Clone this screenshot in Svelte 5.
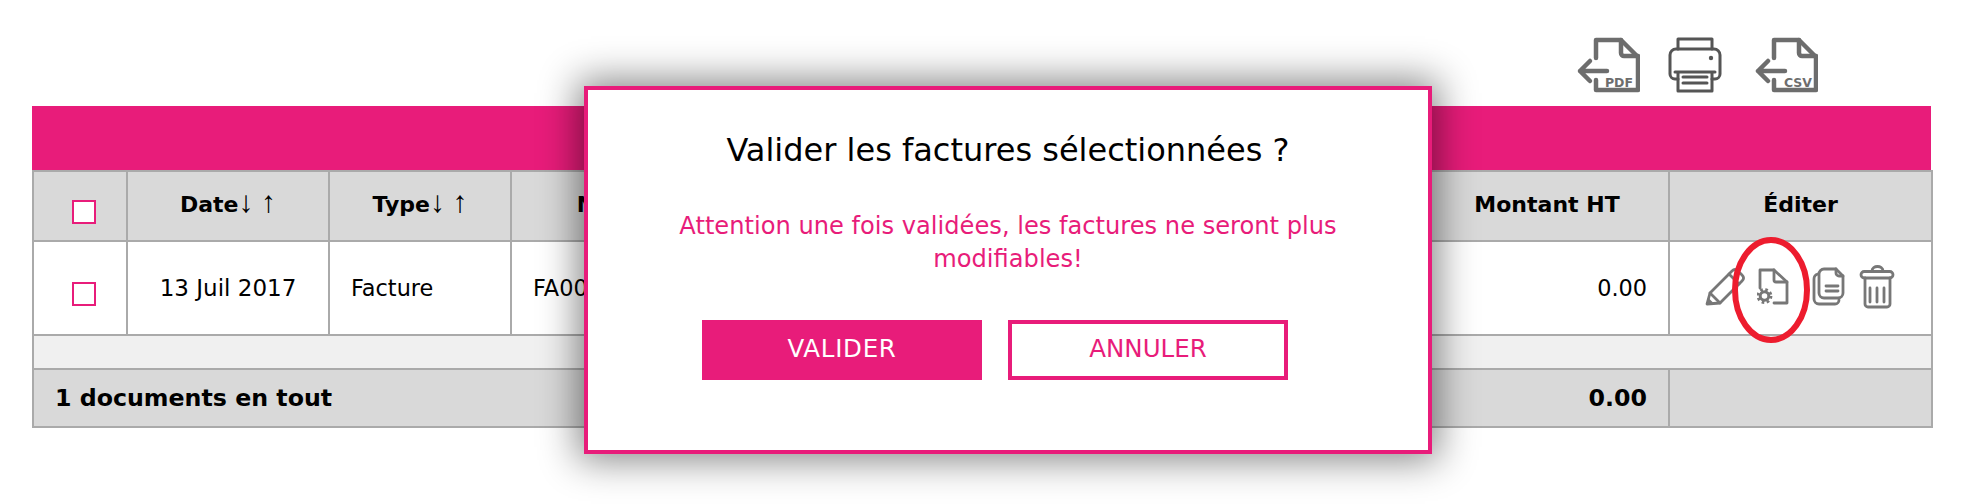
<script>
  const headers = [
    { label: 'Date', sort: true },
    { label: 'Type', sort: true },
    { label: 'Numéro', sort: true },
    { label: '', sort: false },
    { label: 'Montant HT', sort: false },
    { label: 'Éditer', sort: false }
  ];
</script>

<div class="page">
  <div class="tools">
    <svg class="export" viewBox="0 0 64 58" aria-label="Export PDF">
      <path class="s5" d="M20 22V4h25l17 17v33H20V44" />
      <path class="s5" d="M45 4v13a3 3 0 0 0 3 3h14" />
      <path class="s5" d="M31 35H4M14 25L4 35l10 10" />
      <text x="57" y="51" text-anchor="end" class="tag">PDF</text>
    </svg>
    <svg class="print" viewBox="0 0 58 58" aria-label="Imprimer">
      <path class="s3" d="M10 13V3h34v10" />
      <path class="s3" d="M10 43H7a5 5 0 0 1-5-5V19a6 6 0 0 1 6-6h38a6 6 0 0 1 6 6v19a5 5 0 0 1-5 5h-3" />
      <path class="s3" d="M7 36h40M10 36v19h34V36" />
      <path class="s3" d="M15 41h24M15 47h24" />
      <circle cx="43" cy="22" r="2.200" fill="#555" />
    </svg>
    <svg class="export" viewBox="0 0 64 58" aria-label="Export CSV">
      <path class="s5" d="M20 22V4h25l17 17v33H20V44" />
      <path class="s5" d="M45 4v13a3 3 0 0 0 3 3h14" />
      <path class="s5" d="M31 35H4M14 25L4 35l10 10" />
      <text x="58" y="51" text-anchor="end" class="tag">CSV</text>
    </svg>
  </div>

  <div class="band"></div>

  <table>
    <colgroup>
      <col style="width: 94px" />
      <col style="width: 202px" />
      <col style="width: 182px" />
      <col style="width: 267px" />
      <col style="width: 647px" />
      <col style="width: 244px" />
      <col style="width: 263px" />
    </colgroup>
    <thead>
      <tr>
        <th class="check"><span class="box"></span></th>
        {#each headers as h}
          <th>{h.label}{#if h.sort}<span class="arrows"> ↓ ↑</span>{/if}</th>
        {/each}
      </tr>
    </thead>
    <tbody>
      <tr class="row">
        <td class="check"><span class="box"></span></td>
        <td class="center">13 Juil 2017</td>
        <td>Facture</td>
        <td>FA0001</td>
        <td></td>
        <td class="num">0.00</td>
        <td class="actions">
          <div class="icons">
            <svg class="i-pencil" viewBox="0 0 42 42" aria-label="Modifier">
              <path class="s3g" d="M3 38l3-11L28 5q3-3 6 0l4 4q3 3 0 6L16 37z" />
              <path class="s3g" d="M6 27l10 10M25 8l10 10" />
              <path d="M3 38l1.500-6 4.500 4.500z" fill="#777" />
            </svg>
            <svg class="i-doc" viewBox="0 0 32 38" aria-label="Générer">
              <path class="s3g" d="M3 21V3h14l13 12v21H17" />
              <path class="s3g" d="M17 3v10a2 2 0 0 0 2 2h11" />
              <circle cx="7.500" cy="29" r="4.300" fill="none" stroke="#777" stroke-width="3" />
              <circle cx="7.500" cy="29" r="6.500" fill="none" stroke="#777" stroke-width="2.800" stroke-dasharray="2.600 2.505" />
            </svg>
            <svg class="i-copy" viewBox="0 0 34 40" aria-label="Dupliquer">
              <path class="s3g" d="M6 8q-4 1-4 5v20a5 5 0 0 0 5 5h16a4 4 0 0 0 4-4" />
              <path class="s3g" d="M12 3h12l7 7v17a5 5 0 0 1-5 5H12a5 5 0 0 1-5-5V8a5 5 0 0 1 5-5z" />
              <path class="s3g" d="M24 3v4a3 3 0 0 0 3 3h4M14 20h12M14 25h12" />
            </svg>
            <svg class="i-trash" viewBox="0 0 37 48" aria-label="Supprimer">
              <rect class="s3g" x="3" y="8.500" width="32" height="6.500" rx="3.200" />
              <path class="s3g" d="M14 8c0-6 11-6 11 0" />
              <path class="s3g" d="M7 15v26a3 3 0 0 0 3 3h19a3 3 0 0 0 3-3V15" />
              <path class="s3g" d="M12 25v14M19 25v14M26 25v14" />
            </svg>
          </div>
        </td>
      </tr>
      <tr class="spacer"><td colspan="7"></td></tr>
      <tr class="total">
        <td colspan="5">1 documents en tout</td>
        <td class="num">0.00</td>
        <td></td>
      </tr>
    </tbody>
  </table>

  <svg class="circle" viewBox="0 0 80 108" aria-hidden="true">
    <ellipse cx="40" cy="54" rx="36" ry="50" fill="none" stroke="#ed1c2e" stroke-width="6" />
  </svg>

  <div class="modal" role="dialog" aria-label="Valider">
    <h2>Valider les factures sélectionnées ?</h2>
    <p>Attention une fois validées, les factures ne seront plus modifiables!</p>
    <div class="buttons">
      <button class="primary">VALIDER</button>
      <button class="secondary">ANNULER</button>
    </div>
  </div>
</div>

<style>
  :global(body) {
    margin: 0;
    background: #fff;
  }

  .page {
    position: relative;
    width: 1968px;
    height: 504px;
    padding: 0 37px 0 32px;
    box-sizing: border-box;
    font-family: "DejaVu Sans", Verdana, sans-serif;
    font-size: 22.400px;
    color: #000;
    overflow: hidden;
  }

  .tools {
    display: flex;
    justify-content: flex-end;
    align-items: center;
    height: 58px;
    padding: 36px 113px 12px 0;
    gap: 28px;
    box-sizing: content-box;
  }

  .tools svg { display: block; height: 58px; }
  .export { width: 64px; }
  .print { width: 58px; }

  .tag {
    font-family: "DejaVu Sans", sans-serif;
    font-weight: 700;
    font-size: 12.500px;
    fill: #6d6d6d;
  }

  .s5 { fill: none; stroke: #6d6d6d; stroke-width: 4.500; stroke-linejoin: round; stroke-linecap: round; }
  .s3 { fill: none; stroke: #555; stroke-width: 3; stroke-linejoin: round; stroke-linecap: round; }
  .s3g { fill: none; stroke: #777; stroke-width: 2.800; stroke-linejoin: round; stroke-linecap: round; }

  .band {
    height: 64px;
    background: #e81c7a;
  }

  table {
    width: 1899px;
    table-layout: fixed;
    border-collapse: collapse;
  }

  th, td {
    border: 2px solid #aaa;
    padding: 0 21px;
    box-sizing: border-box;
  }

  th {
    height: 70px;
    background: #d9d9d9;
    font-size: 22px;
    line-height: 26px;
    font-weight: 700;
    text-align: center;
    white-space: nowrap;
    padding-bottom: 2px;
  }

  .arrows {
    font-family: "Liberation Serif", "DejaVu Sans", serif;
    font-size: 30px;
    line-height: 20px;
    font-weight: 400;
  }

  .row td { height: 94px; padding-bottom: 0; }
  .center { text-align: center; font-size: 23px; }
  .num { text-align: right; }
  th.check, td.check, .row td.check { text-align: center; padding: 0 0 0 7px; }

  .box {
    display: inline-block;
    width: 24px;
    height: 24px;
    box-sizing: border-box;
    border: 2px solid #e81c7a;
    background: #fff;
    vertical-align: middle;
    margin-top: 11px;
  }

  .row td.actions { padding: 0; }
  .icons {
    display: flex;
    align-items: center;
    gap: 11px;
    padding-left: 34px;
    margin-bottom: 2px;
  }
  .icons svg { display: block; flex: none; }
  .i-pencil { width: 42px; height: 42px; }
  .i-doc { width: 32px; height: 38px; margin-right: 12px; margin-bottom: 2px; }
  .i-copy { width: 34px; height: 40px; margin-right: 1px; margin-bottom: 2px; }
  .i-trash { width: 37px; height: 48px; }

  .spacer td { height: 34px; background: #f0f0f0; padding: 0; }

  .total td {
    height: 58px;
    background: #d9d9d9;
    font-weight: 700;
    font-size: 23.700px;
    padding-bottom: 1px;
  }

  .circle {
    position: absolute;
    left: 1731px;
    top: 236px;
    width: 80px;
    height: 108px;
  }

  .modal {
    position: absolute;
    left: 584px;
    top: 86px;
    width: 848px;
    height: 368px;
    box-sizing: border-box;
    border: 4px solid #e81c7a;
    background: #fff;
    box-shadow: 0 0 36px 6px rgba(0, 0, 0, 0.48);
    text-align: center;
    padding: 39px 80px 0;
  }

  h2 {
    margin: 0;
    font-weight: 400;
    font-size: 32px;
    line-height: 42px;
  }

  p {
    margin: 39px 0 0;
    color: #e81c7a;
    font-size: 24.150px;
    line-height: 33px;
  }

  .buttons {
    display: flex;
    gap: 26px;
    padding-left: 34px;
    margin-top: 44px;
  }

  button {
    flex: none;
    width: 280px;
    height: 60px;
    font: inherit;
    font-size: 24.500px;
    border: 4px solid #e81c7a;
    box-sizing: border-box;
    padding: 0 0 4px;
  }

  .primary { background: #e81c7a; color: #fff; letter-spacing: 0.7px; }
  .secondary { background: #fff; color: #e81c7a; }
</style>
